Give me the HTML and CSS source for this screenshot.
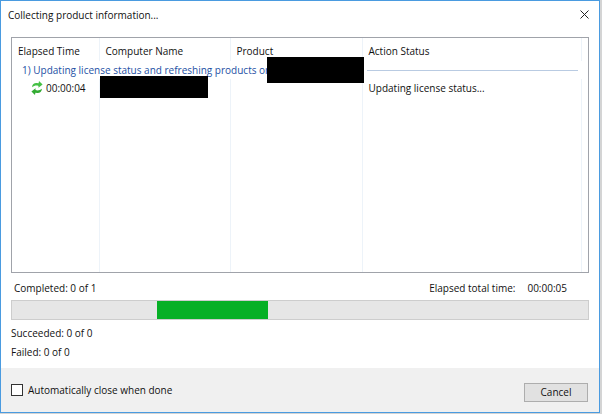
FILE: index.html
```html
<!DOCTYPE html>
<html lang="en">
<head>
  <meta charset="UTF-8">
  <title>Collecting product information...</title>
  <link rel="stylesheet" href="styles.css">
</head>
<body>

<div class="dialog">
  <header class="titlebar">
    <span>Collecting product information...</span>
    <button class="close" type="button" aria-label="Close">
      <svg width="9" height="9" viewBox="0 0 9 9"><path d="M0.5 0.5 L8.5 8.5 M8.5 0.5 L0.5 8.5" stroke="#222" fill="none"/></svg>
    </button>
  </header>

  <main class="content">
    <div class="list">
      <table>
        <colgroup>
          <col class="col-time">
          <col class="col-computer">
          <col class="col-product">
          <col>
          <col class="col-end">
        </colgroup>
        <thead>
          <tr>
            <th>Elapsed Time</th>
            <th>Computer Name</th>
            <th>Product</th>
            <th>Action Status</th>
            <td></td>
          </tr>
        </thead>
        <tbody>
          <tr class="group">
            <td colspan="5">
              <div class="group-line">
                <span>1) Updating license status and refreshing products on</span>
                <span class="group-rule"></span>
                <span class="redacted redacted-domain"></span>
              </div>
            </td>
          </tr>
          <tr class="item">
            <td>
              <div class="time">
                <svg width="12" height="14" viewBox="0 0 12 14">
                  <path d="M1 6.2 C1.2 3.2 3.4 1.8 5.6 2 L7.6 2.2 L8 0 L11.6 3.6 L7.4 6.8 L7.5 4.9 C5.4 4.2 3.4 4.4 1 6.2 Z" fill="#45c045"/>
                  <path d="M11 7.8 C10.8 10.8 8.6 12.2 6.4 12 L4.4 11.8 L4 14 L0.4 10.4 L4.6 7.2 L4.5 9.1 C6.6 9.8 8.6 9.6 11 7.8 Z" fill="#32ab32"/>
                </svg>
                <span>00:00:04</span>
              </div>
            </td>
            <td class="computer"><span class="redacted redacted-computer"></span></td>
            <td></td>
            <td>Updating license status...</td>
            <td></td>
          </tr>
          <tr class="filler">
            <td></td>
            <td></td>
            <td></td>
            <td></td>
            <td></td>
          </tr>
        </tbody>
      </table>
    </div>

    <div class="summary">
      <span>Completed: 0 of 1</span>
      <span class="total"><span>Elapsed total time:</span><span>00:00:05</span></span>
    </div>
    <div class="progress" role="progressbar" aria-label="Progress">
      <div class="progress-chunk"></div>
    </div>
    <p>Succeeded: 0 of 0</p>
    <p>Failed: 0 of 0</p>
  </main>

  <footer class="footer">
    <label class="auto-close"><input type="checkbox">Automatically close when done</label>
    <button class="cancel" type="button">Cancel</button>
  </footer>
</div>

</body>
</html>
```
FILE: styles.css
```css
* {
  box-sizing: border-box;
}

body {
  margin: 0;
  height: 100vh;
  padding: 0 2px 1px 0;
  background-color: #d4d4d4;
  color: #111;
  font-family: "Segoe UI", "Open Sans", "Noto Sans", sans-serif;
  font-size: 10px;
  line-height: 16px;
}

button,
input {
  font: inherit;
  color: inherit;
}

.dialog {
  height: 100%;
  display: flex;
  flex-direction: column;
  border: 1px solid #4a9be0;
  background-color: #fff;
}

.titlebar {
  display: flex;
  align-items: center;
  justify-content: space-between;
  height: 27px;
  padding: 0 10px 0 7px;
}

.close {
  display: flex;
  padding: 0;
  border: none;
  background: none;
}

.content {
  flex: 1;
  display: flex;
  flex-direction: column;
  padding: 9px 10px 6px;
}

.list {
  flex: 1;
  border: 1px solid #a0a3aa;
}

table {
  width: 100%;
  height: 100%;
  table-layout: fixed;
  border-collapse: collapse;
}

.col-time {
  width: 87px;
}

.col-computer {
  width: 131px;
}

.col-product {
  width: 132px;
}

.col-end {
  width: 7px;
}

th,
td {
  height: 18px;
  padding: 0 0 0 6px;
  border-right: 1px solid #edf3f9;
  font-weight: normal;
  text-align: left;
  white-space: nowrap;
}

th {
  height: 23px;
  padding-top: 2px;
}

th:last-child,
td:last-child {
  padding-right: 0;
  border-right: none;
}

.filler td {
  height: auto;
}

.group-line {
  position: relative;
  display: flex;
  align-items: center;
  padding: 0 10px 0 4px;
  color: #2450a4;
}

.group-rule {
  flex: 1;
  height: 1px;
  margin-left: 96px;
  background-color: #b9cbe2;
}

.redacted {
  position: absolute;
  background-color: #000;
}

.redacted-domain {
  left: 249px;
  top: -5px;
  width: 97px;
  height: 26px;
}

.computer {
  position: relative;
}

.redacted-computer {
  left: 0;
  top: -3px;
  width: 108px;
  height: 22px;
}

.time {
  display: flex;
  align-items: center;
  gap: 3px;
  padding-left: 13px;
}

.summary {
  display: flex;
  justify-content: space-between;
  padding: 7px 22px 4px 3px;
}

.total {
  display: flex;
  gap: 12px;
}

.progress {
  height: 20px;
  margin-bottom: 4px;
  padding-left: 1px;
  border: 1px solid #cdcdcd;
  background-color: #e6e6e6;
}

.progress-chunk {
  width: 111px;
  height: 100%;
  margin-left: 25%;
  background-color: #06b025;
}

p {
  margin: 0;
  line-height: 19px;
}

.footer {
  display: flex;
  align-items: center;
  justify-content: space-between;
  height: 44px;
  padding: 0 11px 0 10px;
  background-color: #f0f0f0;
}

.auto-close {
  display: flex;
  align-items: center;
  gap: 5px;
}

.auto-close input {
  appearance: none;
  width: 12px;
  height: 12px;
  margin: 0;
  border: 1px solid #333;
  background-color: #fff;
}

.cancel {
  width: 64px;
  height: 19px;
  margin-top: 4px;
  padding: 0;
  border: 1px solid #adadad;
  background-color: #e1e1e1;
  line-height: 16px;
}
```
